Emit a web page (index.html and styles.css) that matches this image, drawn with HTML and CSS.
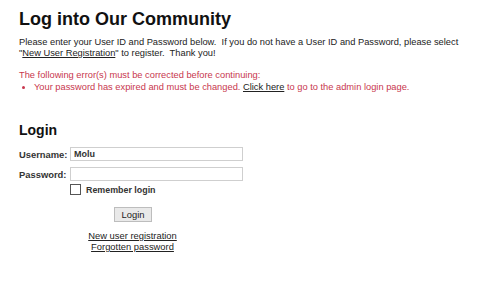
FILE: index.html
```html
<!DOCTYPE html>
<html>
<head>
<meta charset="utf-8">
<link rel="stylesheet" href="styles.css">
</head>
<body>
<div class="page">
  <h1 class="title">Log into Our Community</h1>
  <p class="intro">Please enter your User ID and Password below.&nbsp; If you do not have a User ID and Password, please select<br>"<a href="#">New User Registration</a>" to register.&nbsp; Thank you!</p>
  <div class="errors">
    <div class="err-head">The following error(s) must be corrected before continuing:</div>
    <ul class="err-list">
      <li>Your password has expired and must be changed. <a href="#">Click here</a> to go to the admin login page.</li>
    </ul>
  </div>
  <h2 class="login-title">Login</h2>
  <form class="login-form">
    <label class="lbl" for="u">Username:</label>
    <input class="field" id="u" type="text" value="Molu">
    <label class="lbl" for="p">Password:</label>
    <input class="field" id="p" type="password">
    <span></span>
    <label class="remember"><span class="box"></span>Remember login</label>
    <div class="actions">
      <button type="button" class="btn">Login</button>
    </div>
    <div class="links">
      <a href="#">New user registration</a>
      <a href="#">Forgotten password</a>
    </div>
  </form>
</div>
</body>
</html>
```

FILE: styles.css
```css
html, body {
  margin: 0;
  padding: 0;
  background: #fff;
}
body {
  font-family: "Liberation Sans", Arial, sans-serif;
  color: #222;
}
.page {
  padding: 8px 19px;
}
.title {
  font-size: 18px;
  font-weight: bold;
  color: #111;
  margin: 1px 0 0;
  line-height: 20px;
}
.intro {
  font-size: 9.3px;
  line-height: 11px;
  margin: 8px 0 0;
  color: #222;
}
a {
  color: #222;
  text-decoration: underline;
}
.errors {
  margin-top: 10px;
  color: #c8374e;
  font-size: 9.3px;
  line-height: 12px;
}
.err-list {
  margin: 0;
  padding-left: 15px;
}
.err-list li {
  list-style: disc;
}
.login-title {
  font-size: 14px;
  font-weight: bold;
  color: #111;
  margin: 28px 0 0;
  line-height: 18px;
}
.login-form {
  margin-top: 8px;
  width: 224px;
  display: grid;
  grid-template-columns: 47px 1fr;
  column-gap: 4px;
  row-gap: 6px;
  font-size: 9.4px;
  align-items: center;
}
.lbl {
  font-weight: bold;
  color: #333;
  text-align: right;
}
.field {
  box-sizing: border-box;
  height: 14px;
  border: 1px solid #cfcfcf;
  padding: 0 3px;
  font-family: "Liberation Sans", Arial, sans-serif;
  font-size: 9px;
  font-weight: bold;
  color: #333;
  margin: 0;
  outline: none;
}
.remember {
  display: flex;
  align-items: center;
  gap: 5px;
  font-weight: bold;
  font-size: 8.9px;
  color: #333;
  margin-top: -3px;
}
.box {
  width: 9px;
  height: 9px;
  border: 1px solid #555;
  background: #fff;
}
.actions {
  grid-column: 1 / 3;
  display: flex;
  justify-content: center;
  margin-top: 6px;
}
.btn {
  box-sizing: border-box;
  width: 38px;
  height: 15px;
  padding: 0;
  font-family: "Liberation Sans", Arial, sans-serif;
  font-size: 9.4px;
  color: #222;
  background: #e9e9e9;
  border: 1px solid #bdbdbd;
  margin-left: 4px;
}
.links {
  grid-column: 1 / 3;
  display: flex;
  flex-direction: column;
  align-items: center;
  font-size: 9.4px;
  line-height: 11px;
  margin-top: 2px;
  margin-left: 3px;
}
```
